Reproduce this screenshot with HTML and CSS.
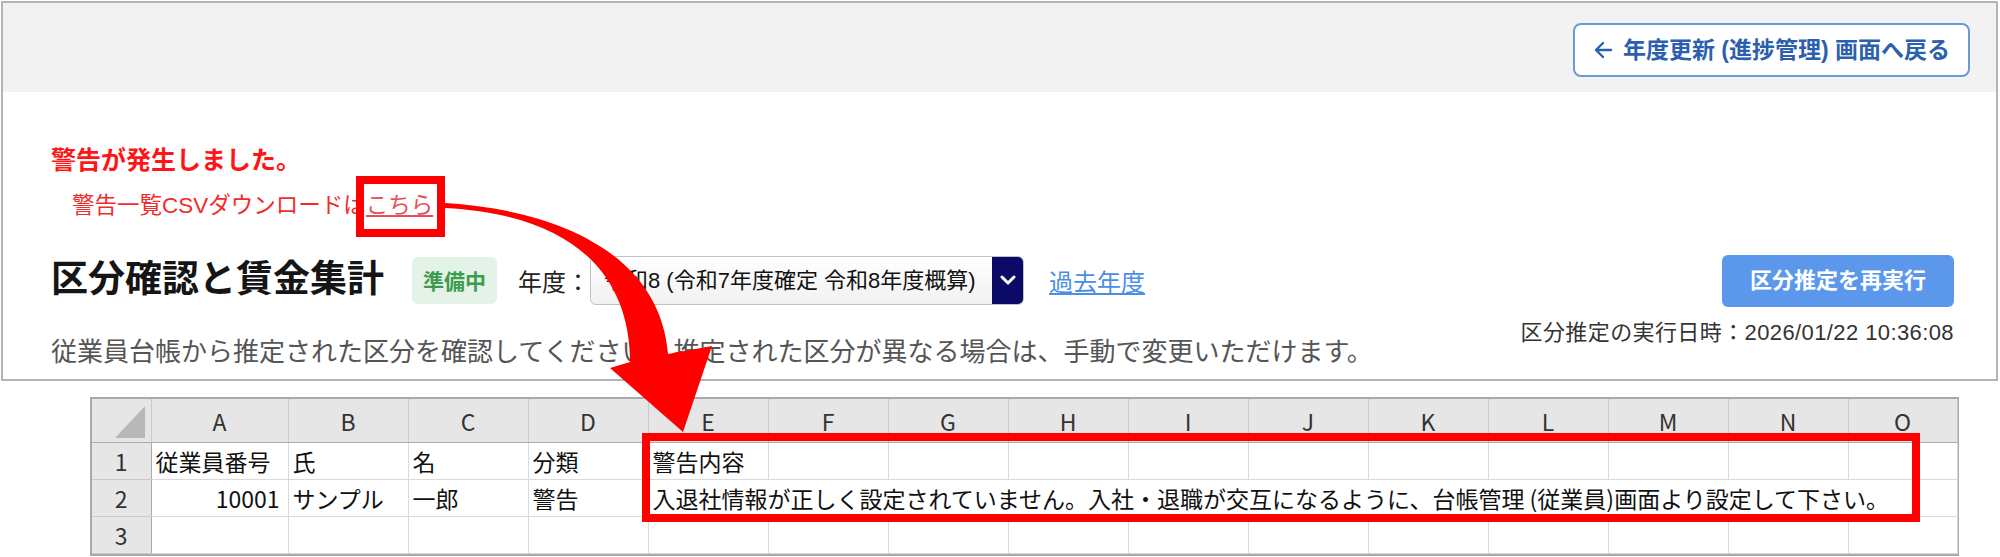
FILE: index.html
```html
<!DOCTYPE html>
<html lang="ja">
<head>
    <meta charset="UTF-8">
    <meta name="viewport" content="width=device-width, initial-scale=1.0">
    <title>区分確認と賃金集計</title>
    <link rel="stylesheet" href="styles.css">
</head>
<body>
<div class="page">
    <div class="panel">
        <header class="topbar">
            <button class="back-btn">
                <svg class="back-icon" width="20" height="18" viewBox="0 0 20 18"><path d="M18 9 H3 M10 2 L3 9 L10 16" fill="none" stroke="currentColor" stroke-width="2.4" stroke-linecap="round" stroke-linejoin="round"/></svg>
                年度更新 (進捗管理) 画面へ戻る
            </button>
        </header>
        <div class="content">
            <p class="alert-title">警告が発生しました。</p>
            <p class="alert-line">警告一覧CSVダウンロードは<a href="#" class="csv-link">こちら</a></p>
            <div class="head">
                <div class="head-main">
                    <div class="title-row">
                        <h1>区分確認と賃金集計</h1>
                        <span class="badge">準備中</span>
                        <label class="year-label">年度：</label>
                        <div class="year-select">
                            <span class="year-value">令和8 (令和7年度確定 令和8年度概算)</span>
                            <span class="year-caret">
                                <svg width="16" height="10" viewBox="0 0 16 10"><path d="M2 2 L8 8 L14 2" fill="none" stroke="#fff" stroke-width="3" stroke-linecap="round" stroke-linejoin="round"/></svg>
                            </span>
                        </div>
                        <a href="#" class="past-link">過去年度</a>
                    </div>
                    <p class="desc">従業員台帳から推定された区分を確認してください。推定された区分が異なる場合は、手動で変更いただけます。</p>
                </div>
                <div class="head-side">
                    <button class="rerun-btn">区分推定を再実行</button>
                    <p class="stamp">区分推定の実行日時：2026/01/22 10:36:08</p>
                </div>
            </div>
        </div>
    </div>

    <!-- exported warning list (spreadsheet view) -->
    <div class="sheet">
        <table class="grid">
            <colgroup>
                <col class="c-row"><col class="c-a">
                <col class="c-std"><col class="c-std"><col class="c-std"><col class="c-std"><col class="c-std">
                <col class="c-std"><col class="c-std"><col class="c-std"><col class="c-std"><col class="c-std">
                <col class="c-std"><col class="c-std"><col class="c-std"><col class="c-o">
            </colgroup>
            <thead>
                <tr>
                    <th class="corner"><span class="corner-tri"></span></th>
                    <th>A</th><th>B</th><th>C</th><th>D</th><th>E</th><th>F</th><th>G</th><th>H</th>
                    <th>I</th><th>J</th><th>K</th><th>L</th><th>M</th><th>N</th><th>O</th>
                </tr>
            </thead>
            <tbody>
                <tr>
                    <th>1</th>
                    <td>従業員番号</td><td>氏</td><td>名</td><td>分類</td><td>警告内容</td>
                    <td></td><td></td><td></td><td></td><td></td><td></td><td></td><td></td><td></td><td></td>
                </tr>
                <tr>
                    <th>2</th>
                    <td class="num">10001</td><td>サンプル</td><td>一郎</td><td>警告</td>
                    <td colspan="11" class="long">入退社情報が正しく設定されていません。入社・退職が交互になるように、台帳管理 (従業員)画面より設定して下さい。</td>
                </tr>
                <tr>
                    <th>3</th>
                    <td></td><td></td><td></td><td></td><td></td><td></td><td></td><td></td>
                    <td></td><td></td><td></td><td></td><td></td><td></td><td></td>
                </tr>
            </tbody>
        </table>
        <div class="sheet-mark"></div>
    </div>

    <svg class="pointer" width="2000" height="557" viewBox="0 0 2000 557">
        <path d="M445 203 C560 210 660 255 668 354 L712 346 L683 432 L610 368 L630 362 C630 280 580 215 445 208 Z" fill="#ff0000"/>
    </svg>
</div>
</body>
</html>
```

FILE: styles.css
```css
body {
    margin: 0;
    font-family: "Liberation Sans", "Noto Sans CJK JP", sans-serif;
    color: #222;
    background: #fff;
    overflow: hidden;
}
.page {
    position: relative;
    width: 2000px;
    height: 557px;
    overflow: hidden;
}
p {
    margin: 0;
}

/* top panel */
.panel {
    margin: 1px 2px 0 1px;
    border: 2px solid #b4b4b4;
}
.topbar {
    height: 89px;
    box-sizing: border-box;
    padding: 20px 26px 0 0;
    background: #f2f2f2;
    display: flex;
    justify-content: flex-end;
    align-items: flex-start;
}
.back-btn {
    height: 54px;
    padding: 0 18px;
    display: flex;
    align-items: center;
    border: 2px solid #6c98dc;
    border-radius: 8px;
    background: #fff;
    color: #2c5fae;
    font: bold 23px/1 "Liberation Sans", "Noto Sans CJK JP", sans-serif;
}
.back-icon {
    margin-right: 10px;
}
.content {
    padding: 0 42px 9px 48px;
}
.alert-title {
    margin-top: 52px;
    font-size: 25px;
    line-height: 32px;
    font-weight: bold;
    color: #ff1515;
}
.alert-line {
    margin: 15px 0 0 21px;
    font-size: 22.5px;
    line-height: 30px;
    color: #f52a2a;
}
.csv-link {
    display: inline-block;
    line-height: 30px;
    color: #e4525a;
    text-decoration: underline;
    border: 8px solid #ff0000;
    padding: 7px 4px 8px 2px;
    margin: -15px -12px -16px -10px;
}

/* heading row */
.head {
    margin-top: 32px;
    display: flex;
    justify-content: space-between;
    align-items: flex-start;
}
.title-row {
    height: 54px;
    display: flex;
    align-items: center;
}
.title-row h1 {
    margin: 0;
    font-size: 37px;
    line-height: 54px;
    font-weight: bold;
    color: #151515;
}
.badge {
    margin-left: 28px;
    height: 47px;
    padding: 0 11px;
    display: flex;
    align-items: center;
    border-radius: 6px;
    background: #e4f3e7;
    color: #3d9b50;
    font-size: 21px;
    font-weight: bold;
}
.year-label {
    margin-left: 21px;
    font-size: 24px;
    color: #222;
}
.year-select {
    width: 434px;
    height: 49px;
    box-sizing: border-box;
    display: flex;
    border: 1px solid #c2c2c2;
    border-radius: 6px;
    background: linear-gradient(#fff, #f1f1f1);
    overflow: hidden;
}
.year-value {
    flex: 1;
    padding-left: 13px;
    font-size: 22px;
    line-height: 47px;
    color: #111;
    white-space: nowrap;
}
.year-caret {
    width: 31px;
    background: #0b0b67;
    display: flex;
    align-items: center;
    justify-content: center;
}
.past-link {
    margin-left: 25px;
    font-size: 24px;
    color: #4a8ee6;
}
.desc {
    margin-top: 27px;
    font-size: 26px;
    line-height: 36px;
    color: #555;
}
.head-side {
    padding-top: 2px;
    display: flex;
    flex-direction: column;
    align-items: flex-end;
}
.rerun-btn {
    width: 232px;
    height: 52px;
    border: 0;
    border-radius: 6px;
    background: #5b98ec;
    color: #fff;
    font: bold 22px/1 "Liberation Sans", "Noto Sans CJK JP", sans-serif;
}
.stamp {
    margin-top: 12px;
    font-size: 22px;
    line-height: 28px;
    letter-spacing: 0.4px;
    color: #333;
}

/* spreadsheet */
.sheet {
    position: relative;
    width: 1865px;
    margin: 16px 0 0 90px;
    border: 2px solid #a9a9a9;
    font-family: "Noto Sans CJK JP", sans-serif;
}
.grid {
    width: 1865px;
    border-collapse: collapse;
    table-layout: fixed;
}
.c-row { width: 59px; }
.c-a { width: 137px; }
.c-std { width: 120px; }
.c-o { width: 109px; }
.grid th,
.grid td {
    padding: 0;
    font-size: 23px;
    font-weight: normal;
    white-space: nowrap;
    overflow: hidden;
}
.grid thead th {
    height: 43px;
    background: #e6e6e6;
    color: #333;
    text-align: center;
    border-right: 1px solid #cacaca;
    border-bottom: 1px solid #ababab;
}
.grid tbody th {
    height: 36px;
    background: #e6e6e6;
    color: #333;
    text-align: center;
    border-right: 1px solid #ababab;
    border-bottom: 1px solid #cacaca;
}
.grid td {
    height: 36px;
    padding-left: 4px;
    color: #111;
    border-right: 1px solid #dadada;
    border-bottom: 1px solid #dadada;
}
.grid td.num {
    text-align: right;
    padding: 0 8px 0 0;
}
.grid td.long {
    overflow: visible;
}
.grid th.corner {
    position: relative;
}
.corner-tri {
    position: absolute;
    right: 6px;
    bottom: 4px;
    width: 0;
    height: 0;
    border-left: 30px solid transparent;
    border-bottom: 32px solid #b8b8b8;
}
.sheet-mark {
    position: absolute;
    left: 550px;
    top: 34px;
    width: 1278px;
    height: 89px;
    box-sizing: border-box;
    border: 8px solid #ff0000;
}

/* annotation arrow */
.pointer {
    position: absolute;
    left: 0;
    top: 0;
    pointer-events: none;
}
```
